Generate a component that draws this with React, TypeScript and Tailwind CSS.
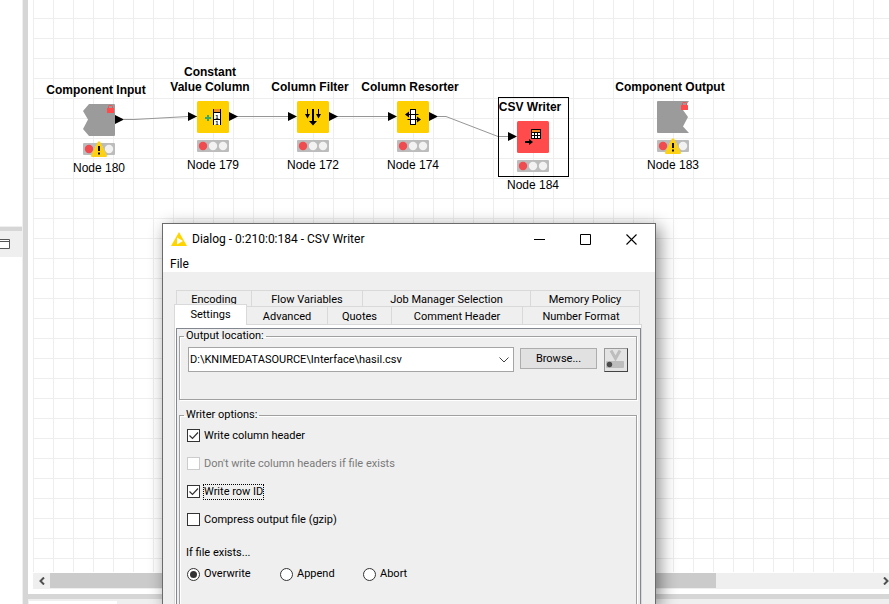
import React, { useState } from "react";

const ARIAL = "font-['Liberation_Sans',Arial,sans-serif]";
const TAHOMA = "font-['Roboto',Tahoma,sans-serif] text-[11px] leading-[14px]";

type NodeProps = {
  title: string[];
  label: string;
  place: string;
  warning?: boolean;
  input?: boolean;
  output?: boolean;
  selected?: boolean;
  children: React.ReactNode;
};

function Lock() {
  return (
    <g>
      <path d="M25.5 5V2.500a1 1 0 0 1 1-1h2a1 1 0 0 1 1 1V5" fill="none" stroke="#ff4b4b" />
      <rect x="24" y="4" width="7" height="5" rx="0.5" fill="#ff4b4b" />
    </g>
  );
}

function Status({ warning }: { warning?: boolean }) {
  return (
    <svg width="32" height="12" viewBox="0 0 32 12" className="overflow-visible">
      <rect width="32" height="12" rx="1" fill="#bcbcbc" />
      <circle cx="6" cy="6" r="4.2" fill="#f04b4f" />
      <circle cx="16" cy="6" r="4.2" fill="#f2f2f2" />
      <circle cx="26" cy="6" r="4.2" fill="#f2f2f2" />
      {warning && (
        <g>
          <path d="M15 -1.500h2L24 12.500q0 1.500-1 1.500H9q-1 0-1-1.500z" fill="#fcd116" />
          <path d="M15 3h2v5h-2zM15 9.500h2v2h-2z" fill="#111" />
        </g>
      )}
    </svg>
  );
}

/* One workflow node: title on top, 32px icon with its ports, status lights, name. */
function FlowNode({ title, label, place, warning, input, output, selected, children }: NodeProps) {
  return (
    <div className={`absolute flex w-32 flex-col items-center ${ARIAL} text-xs text-black ${place}`}>
      {selected && <div className="absolute left-[29px] top-[13px] h-20 w-[71px] border border-black" />}
      <div className="flex h-[31px] flex-col justify-end whitespace-nowrap pr-1.5 text-center font-bold leading-[15px]">
        {title.map((line) => (
          <div key={line}>{line}</div>
        ))}
      </div>
      <svg width="50" height="32" viewBox="-9 0 50 32" className="mt-[6px]">
        {input && <path d="M-9 11L0 15.500L-9 20z" fill="#000" />}
        {output && <path d="M32 11L41 15.500L32 20z" fill="#000" />}
        {children}
      </svg>
      <div className="mt-[7px] h-3">
        <Status warning={warning} />
      </div>
      <div className="mt-[6px] leading-[15px]">{label}</div>
    </div>
  );
}

function Workflow() {
  return (
    <>
      <svg className="absolute left-0 top-0 h-full w-full" fill="none" stroke="#969696">
        <path d="M91 119.500H101L155 116.500H164M196 116.500H255M296 116.500H355M405 116.500H413L465 136.500H475" />
      </svg>
      <FlowNode title={["Component Input"]} label="Node 180" place="left-[2px] top-[67px]" warning output>
        <path d="M6 0H31.500L32 1V31L31.500 32H6L0 25L5 15.500L0 7z" fill="#9b9b9b" />
        <Lock />
      </FlowNode>
      <FlowNode title={["Constant", "Value Column"]} label="Node 179" place="left-[116px] top-[64px]" input output>
        <rect width="32" height="32" rx="1.5" fill="#ffd000" />
        <path d="M8 17H14M11 14V20" stroke="#39a86b" strokeWidth="2" />
        <rect x="16" y="8" width="8" height="16" fill="#fff" />
        <rect x="16" y="8" width="8" height="3" fill="#f28c28" />
        <path d="M16.500 8V24M23.500 8V24M16 11.500H24M16 18.500H24" stroke="#000" />
        <text x="20" y="17.500" fontSize="6" fontWeight="bold" textAnchor="middle">1</text>
        <text x="20" y="24" fontSize="6" fontWeight="bold" textAnchor="middle">1</text>
      </FlowNode>
      <FlowNode title={["Column Filter"]} label="Node 172" place="left-[216px] top-[64px]" input output>
        <rect width="32" height="32" rx="1.5" fill="#ffd000" />
        <path d="M16 8V22" stroke="#000" strokeWidth="2" />
        <path d="M12 20H20L16 24.500zM8 13H13L10.500 17.500zM19 13H24L21.500 17.500z" fill="#000" />
        <path d="M10.500 8V15M21.500 8V15" stroke="#000" />
      </FlowNode>
      <FlowNode title={["Column Resorter"]} label="Node 174" place="left-[316px] top-[64px]" input output>
        <rect width="32" height="32" rx="1.5" fill="#ffd000" />
        <rect x="13.500" y="8.500" width="5" height="15" fill="#fff" stroke="#000" />
        <path d="M10 13.500H21.500M22 18.500H10.500" fill="none" stroke="#000" />
        <path d="M8 13.500L12 10.500V16.500zM24 18.500L20 15.500V21.500z" fill="#000" />
      </FlowNode>
      <FlowNode title={["CSV Writer"]} label="Node 184" place="left-[436px] top-[84px]" input selected>
        <rect width="32" height="32" rx="1.5" fill="#ff4b4b" />
        <rect x="14.500" y="8.500" width="9" height="9" fill="#fff" stroke="#000" />
        <rect x="15" y="9" width="8" height="2" fill="#f28c28" />
        <path d="M14 11.500H24M14 14.500H24M17.500 11V18M20.500 11V18" stroke="#000" />
        <path d="M8 21H13" stroke="#000" strokeWidth="2" />
        <path d="M12 18L16 21L12 24z" fill="#000" />
      </FlowNode>
      <FlowNode title={["Component Output"]} label="Node 183" place="left-[576px] top-[64px]" warning>
        <path d="M0.500 0H32L26 9L31 16L26 25.500L32 32H0.500L0 31V1z" fill="#9b9b9b" />
        <Lock />
      </FlowNode>
    </>
  );
}

function Tab({ text, size, last }: { text: string; size: string; last?: boolean }) {
  return (
    <button
      type="button"
      role="tab"
      className={`border-l border-t border-[#d9d9d9] pt-[2px] text-center whitespace-nowrap ${last ? "border-r" : ""} ${size}`}
    >
      {text}
    </button>
  );
}

function Check({ text, initial = false, disabled, focused }: { text: string; initial?: boolean; disabled?: boolean; focused?: boolean }) {
  const [on, setOn] = useState(initial);
  return (
    <label className={`flex h-[13px] items-center gap-1 ${disabled ? "text-[#7a7a7a]" : ""}`}>
      <span className="relative flex">
        <input
          type="checkbox"
          checked={on}
          disabled={disabled}
          onChange={() => setOn(!on)}
          className={`size-[13px] appearance-none border bg-white ${disabled ? "border-[#cccccc]" : "border-[#333333]"}`}
        />
        {on && (
          <svg width="13" height="13" className="pointer-events-none absolute left-0 top-0">
            <path d="M2.500 6.500L5.500 9.500L11 3.500" fill="none" stroke="#333" strokeWidth="1.2" />
          </svg>
        )}
      </span>
      <span className={focused ? "outline-1 outline-dotted outline-black" : ""}>{text}</span>
    </label>
  );
}

function Radio({ text, value, onPick, size }: { text: string; value: string; onPick: (v: string) => void; size: string }) {
  return (
    <label className={`flex items-center gap-1 ${size}`}>
      <span className="relative flex">
        <input
          type="radio"
          name="exists"
          checked={value === text}
          onChange={() => onPick(text)}
          className="size-[13px] appearance-none rounded-full border border-[#333333] bg-white"
        />
        {value === text && <span className="pointer-events-none absolute left-[3px] top-[3px] size-[7px] rounded-full bg-[#333333]" />}
      </span>
      {text}
    </label>
  );
}

function Dialog() {
  const [path, setPath] = useState("D:\\KNIMEDATASOURCE\\Interface\\hasil.csv");
  const [exists, setExists] = useState("Overwrite");
  return (
    <div
      role="dialog"
      aria-label="CSV Writer"
      className={`absolute bottom-0 left-[162px] top-[223px] flex w-[494px] flex-col border border-b-0 border-[#6b6b6b] bg-[#efefef] text-black shadow-[4px_4px_16px_rgba(0,0,0,0.45)] ${TAHOMA}`}
    >
      <header className="flex h-[30px] shrink-0 items-center bg-white pl-2 pr-px font-['Roboto','Segoe_UI',sans-serif] text-xs">
        <svg width="16" height="14" viewBox="0 0 16 14">
          <path d="M8 0L16 14H0z" fill="#ffd500" />
          <path d="M6 5.500L12 9L6 12.500z" fill="#fff" />
        </svg>
        <h1 className="grow whitespace-nowrap pl-[5px]">Dialog - 0:210:0:184 - CSV Writer</h1>
        <div className="flex text-black">
          <button type="button" aria-label="Minimize" className="flex w-[46px] justify-center">
            <svg width="11" height="11" stroke="#000"><path d="M0 5.500H11" /></svg>
          </button>
          <button type="button" aria-label="Maximize" className="flex w-[46px] justify-center">
            <svg width="11" height="11" stroke="#000" fill="none"><path d="M0.500 0.500H10.500V10.500H0.500z" /></svg>
          </button>
          <button type="button" aria-label="Close" className="flex w-[46px] justify-center">
            <svg width="11" height="11" stroke="#000" strokeWidth="1.1"><path d="M0.500 0.500L10.500 10.500M10.500 0.500L0.500 10.500" /></svg>
          </button>
        </div>
      </header>
      <nav className="flex h-[18px] shrink-0 items-center bg-white pl-[7px] pt-0.5 font-['Roboto','Segoe_UI',sans-serif] text-xs">
        <button type="button">File</button>
      </nav>

      <div className="flex grow flex-col pl-[11px] pr-[13px] pt-[18px]">
        <div role="tablist" className="mx-0.5">
          <div className="flex h-4">
            <Tab text="Encoding" size="w-[75px]" />
            <Tab text="Flow Variables" size="w-[111px]" />
            <Tab text="Job Manager Selection" size="w-[168px]" />
            <Tab text="Memory Policy" size="grow" last />
          </div>
          <div className="flex h-[18px]">
            <button
              type="button"
              role="tab"
              aria-selected="true"
              className="relative z-10 -ml-0.5 -mt-0.5 h-[21px] w-[73px] border border-b-0 border-[#d9d9d9] bg-white text-center"
            >
              Settings
            </button>
            <Tab text="Advanced" size="w-20 border-l-0" />
            <Tab text="Quotes" size="w-16" />
            <Tab text="Comment Header" size="w-[131px]" />
            <Tab text="Number Format" size="grow" last />
          </div>
        </div>

        <div className="flex grow flex-col border border-b-0 border-[#d9d9d9] bg-white pl-px pt-[3px]">
          <div className="flex grow flex-col gap-2 border border-b-0 border-[#828790] bg-[#efefef] pl-0.5 pr-[3px]">
            <fieldset className="h-[71px] border border-[#a0a0a0] px-2 shadow-[1px_1px_0_#fff,inset_1px_1px_0_#fff]">
              <legend className="-ml-1 px-[2px]">Output location:</legend>
              <div className="flex items-start gap-1.5 pt-1">
                <div className="flex h-[25px] grow items-center border border-[#a5a5a5] bg-white">
                  <input
                    type="text"
                    aria-label="Output location"
                    value={path}
                    onChange={(e) => setPath(e.target.value)}
                    className="min-w-0 grow pl-px outline-none"
                  />
                  <button type="button" aria-label="Show recent locations" className="px-1">
                    <svg width="10" height="6" fill="none" stroke="#444"><path d="M0.500 0.500L5 5L9.500 0.500" /></svg>
                  </button>
                </div>
                <button type="button" className="mr-px mt-px h-[21px] w-[77px] border border-[#adadad] bg-[#e1e1e1]">
                  Browse...
                </button>
                <button
                  type="button"
                  aria-label="Flow variable"
                  className="mt-px h-6 w-6 border border-b-[#444] border-l-[#999] border-r-[#444] border-t-[#999] bg-[#e3e3e3]"
                >
                  <svg width="22" height="22" viewBox="0 0 22 22">
                    <path d="M6 1.500L10.500 9.500L15 1.500" fill="none" stroke="#bdbdbd" strokeWidth="3" />
                    <rect x="1" y="12" width="18" height="7" rx="1" fill="#bdbdbd" />
                    <circle cx="4.500" cy="15.500" r="2.700" fill="#4a4a4a" />
                  </svg>
                </button>
              </div>
            </fieldset>

            <fieldset className="grow border border-b-0 border-[#a0a0a0] px-[7px] shadow-[1px_0_0_#fff,inset_1px_1px_0_#fff]">
              <legend className="-ml-[3px] px-[2px]">Writer options:</legend>
              <div className="flex flex-col gap-[15px] pt-[7px]">
                <Check text="Write column header" initial />
                <Check text="Don't write column headers if file exists" disabled />
                <Check text="Write row ID" initial focused />
                <Check text="Compress output file (gzip)" />
              </div>
              <p className="-ml-px pt-5">If file exists...</p>
              <div className="flex pt-[7px]">
                <Radio text="Overwrite" value={exists} onPick={setExists} size="w-[93px]" />
                <Radio text="Append" value={exists} onPick={setExists} size="w-[83px]" />
                <Radio text="Abort" value={exists} onPick={setExists} size="" />
              </div>
            </fieldset>
          </div>
        </div>
      </div>
    </div>
  );
}

export default function App() {
  return (
    <div className="relative flex h-screen overflow-hidden bg-[#d6d6d6]">
      <aside className="flex w-[23px] shrink-0 flex-col gap-1 border-r border-[#efefef]">
        <div className="h-[227px] border-b border-[#efefef] bg-white" />
        <div className="flex grow flex-col bg-white">
          <div className="flex h-[26px] items-center bg-[#efefef]">
            <svg width="10" height="10" fill="#fff" stroke="#555">
              <path d="M-0.500 0.500H9.500V9.500H-0.500zM0 2.500H9.500" />
            </svg>
          </div>
        </div>
      </aside>

      <main className="ml-[5px] flex min-w-0 grow flex-col">
        <section className="flex min-h-0 grow flex-col bg-white pb-[5px] pl-[5px]">
          <div className="relative mb-px grow overflow-hidden bg-[linear-gradient(#eeeeee_1px,transparent_1px),linear-gradient(90deg,#eeeeee_1px,transparent_1px)] bg-[length:20px_20px] bg-[position:0_18px]">
            <Workflow />
          </div>
          <div className="flex h-4 shrink-0 items-center bg-[#efefef]">
            <button type="button" aria-label="Scroll left" className="flex w-[17px] justify-center">
              <svg width="6" height="8" fill="none" stroke="#505050" strokeWidth="2"><path d="M5 0.500L1.500 4L5 7.500" /></svg>
            </button>
            <div className="h-full grow pb-px">
              <div className="h-full w-4/5 bg-[#cbcbcb]" />
            </div>
            <button type="button" aria-label="Scroll right" className="flex w-[6px] justify-center">
              <svg width="6" height="8" fill="none" stroke="#505050" strokeWidth="2"><path d="M1 0.500L4.500 4L1 7.500" /></svg>
            </button>
          </div>
        </section>
        <section className="mt-[5px] h-[5px] shrink-0 bg-[#efefef] pt-[2px]">
          <div className="ml-px h-full w-[88px] bg-white" />
        </section>
      </main>

      <Dialog />
    </div>
  );
}
